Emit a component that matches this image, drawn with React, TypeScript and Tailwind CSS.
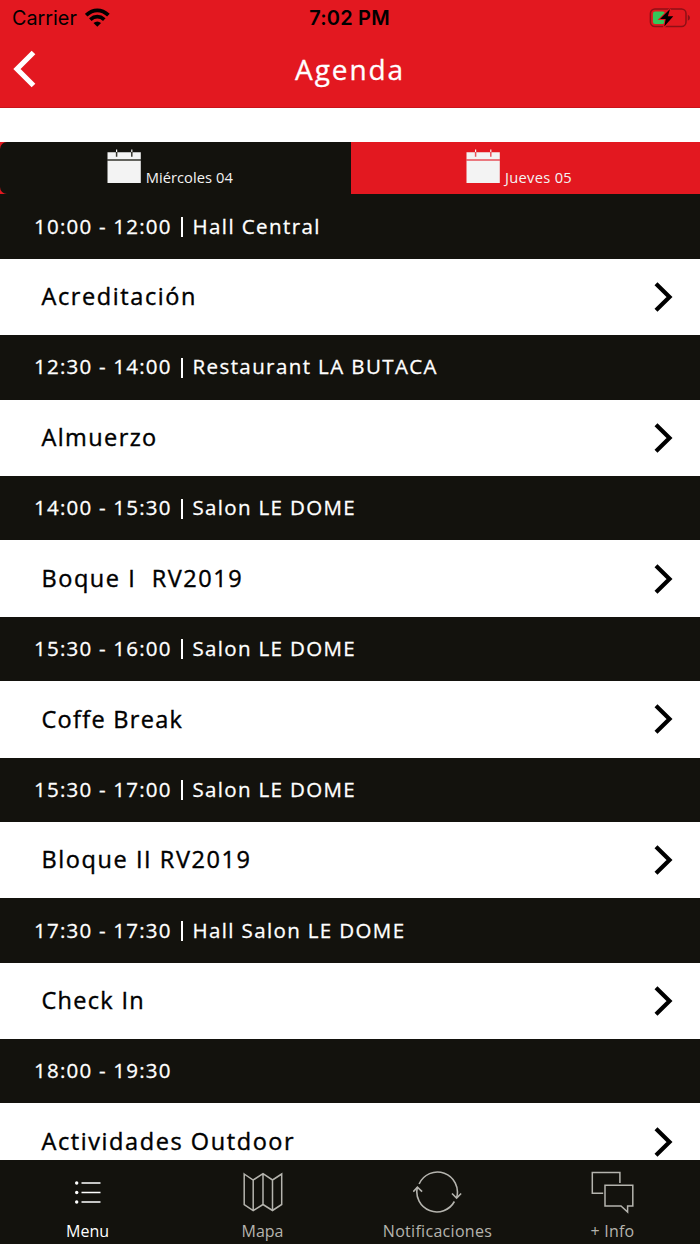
import { ReactNode } from "react";
import clsx from "clsx";

type Session = {
  time: string;
  room?: string;
  title: string;
  roomTracking?: string;
  titleTracking: string;
};

const sessions: Session[] = [
  {
    time: "10:00 - 12:00",
    room: "Hall Central",
    title: "Acreditación",
    roomTracking: "tracking-[1.42px]",
    titleTracking: "tracking-[1.6px]",
  },
  {
    time: "12:30 - 14:00",
    room: "Restaurant LA BUTACA",
    title: "Almuerzo",
    roomTracking: "tracking-[1.4px]",
    titleTracking: "tracking-[1.4px]",
  },
  {
    time: "14:00 - 15:30",
    room: "Salon LE DOME",
    title: "Boque I  RV2019",
    roomTracking: "tracking-[1.33px]",
    titleTracking: "tracking-[1.55px]",
  },
  {
    time: "15:30 - 16:00",
    room: "Salon LE DOME",
    title: "Coffe Break",
    roomTracking: "tracking-[1.33px]",
    titleTracking: "tracking-[1.3px]",
  },
  {
    time: "15:30 - 17:00",
    room: "Salon LE DOME",
    title: "Bloque II RV2019",
    roomTracking: "tracking-[1.33px]",
    titleTracking: "tracking-[1.58px]",
  },
  {
    time: "17:30 - 17:30",
    room: "Hall Salon LE DOME",
    title: "Check In",
    roomTracking: "tracking-[1.37px]",
    titleTracking: "tracking-[1.3px]",
  },
  {
    time: "18:00 - 19:30",
    title: "Actividades Outdoor",
    titleTracking: "tracking-[1.58px]",
  },
];

const WifiIcon = () => (
  <svg width="26" height="20" viewBox="0 0 26 20" fill="none" stroke="#000" strokeWidth="3.8">
    <path d="M1.2 7.2Q6.4 2.3 12.3 2.3T23.4 7.2" />
    <path d="M5.3 11.6Q8.6 8.7 12.3 8.7T19.3 11.6" />
    <path d="M8.5 15Q12.3 11.8 16.1 15L12.3 18.8Z" fill="#000" stroke="none" />
  </svg>
);

const BatteryIcon = () => (
  <svg width="42" height="20" viewBox="0 0 42 20">
    <rect x="1.4" y="1" width="35.6" height="17.5" rx="4.5" fill="none" stroke="#8d1016" strokeWidth="1.5" />
    <path d="M38.8 6.8Q41 7.6 41 9.8T38.8 12.8Z" fill="#8d1016" />
    <rect x="3.9" y="3.5" width="12" height="12.5" rx="2.2" fill="#34c759" />
    <path
      d="M21 1L11 11H16.7L15.3 18.6L24.3 8.2H18.9Z"
      fill="#000"
      stroke="#e31820"
      strokeWidth="2"
      paintOrder="stroke"
    />
  </svg>
);

const CalendarIcon = ({ lineClass }: { lineClass: string }) => (
  <svg width="34" height="35" viewBox="0 0 34 35">
    <path d="M.5 3.3H33.8V34H.5Z" fill="#f3f3f3" />
    <path d="M0 11H34M9.6 3V7.7M24.8 3V7.7" className={lineClass} strokeWidth="1.5" fill="none" />
    <path d="M9.6 .5V3M24.8 .5V3" stroke="#f3f3f3" strokeWidth="1.2" />
  </svg>
);

const ChevronRight = () => (
  <svg width="19" height="30" viewBox="0 0 19 30" fill="none" stroke="#000" strokeWidth="4.2">
    <path d="M2 1.7L15.5 15L2 28.3" />
  </svg>
);

const MenuIcon = () => (
  <svg width="30" height="24" viewBox="0 0 30 24" stroke="#fff" strokeWidth="1.7">
    <path d="M8.5 3H27.5M8.5 12.5H27.5M8.5 22H27.5" />
    <g fill="#fff" stroke="none">
      <circle cx="3.7" cy="3" r="1.7" />
      <circle cx="3.7" cy="12.5" r="1.7" />
      <circle cx="3.7" cy="22" r="1.7" />
    </g>
  </svg>
);

const MapIcon = () => (
  <svg width="40" height="40" viewBox="0 0 40 40" fill="none" stroke="#b5b4ae" strokeWidth="1.5">
    <path d="M1.2 2L10.2 8L20 1.7L29.5 8L38.7 2V32.5L29.5 38.5L20 32.5L10.2 38.5L1.2 32.5ZM10.2 8V38M20 2V32.5M29.5 8V38" />
  </svg>
);

const SyncIcon = () => (
  <svg width="50" height="44" viewBox="0 0 50 44" fill="none" stroke="#b5b4ae" strokeWidth="1.6">
    <g transform="translate(-.9 1.2)">
      <path d="M7 12.8A20 20 0 0 1 44.5 26.5" />
      <path d="M42.3 30.3A20 20 0 0 1 5.3 16" />
      <path d="M1.2 20.5L5.3 16L10 20.5M39.9 22.3L44.5 26.8L49 22.3" />
    </g>
  </svg>
);

const ChatIcon = () => (
  <svg width="44" height="43" viewBox="0 0 44 43" fill="none" stroke="#b5b4ae" strokeWidth="1.5">
    <path d="M12.2 22.3H1.3V1.6H28.9V12" />
    <path d="M14 14.2H41.8V35H36.6V41L30 35H14Z" />
  </svg>
);

const Tab = ({ label, active }: { label: string; active?: boolean }) => (
  <button
    className={clsx(
      "flex items-start justify-center gap-[5px] pt-[7px] text-[#f3f3f3]",
      active ? "w-[351px] rounded-l-[7px] bg-[#13120d] pr-[11.5px]" : "flex-1 bg-[#e31820] pr-[13px]",
    )}
  >
    <CalendarIcon lineClass={active ? "stroke-[#34342d]" : "stroke-[#e8505a]"} />
    <span
      className={clsx(
        "mt-[18px] text-[14.7px] leading-5 whitespace-nowrap",
        active ? "tracking-[0.05px]" : "tracking-[0.3px]",
      )}
    >
      {label}
    </span>
  </button>
);

type NavItemProps = {
  label: string;
  icon: ReactNode;
  className: string;
};

const NavItem = ({ label, icon, className }: NavItemProps) => (
  <button className="flex w-[175px] flex-col items-center pt-2.5">
    <span className="flex h-[44px] items-center">{icon}</span>
    <span className={clsx("mt-[7px] text-[16px] leading-5 whitespace-nowrap", className)}>
      {label}
    </span>
  </button>
);

const App = () => {
  return (
    <div className="flex h-[1244px] w-[700px] flex-col overflow-hidden bg-white font-['Open_Sans','Noto_Sans',sans-serif]">
      <header className="h-[108px] shrink-0 border-b border-[#c9141b] bg-[#e31820]">
        <div className="grid h-9 grid-cols-3 items-center pr-[9px] pl-3 font-['Inter',sans-serif] text-black">
          <div className="flex items-center gap-2">
            <span className="text-[19.8px] leading-6">Carrier</span>
            <WifiIcon />
          </div>
          <span className="pr-1 text-center text-[20px] leading-6 font-semibold tracking-[0.2px]">
            7:02 PM
          </span>
          <div className="flex justify-end">
            <BatteryIcon />
          </div>
        </div>
        <div className="grid h-[66px] grid-cols-[60px_1fr_60px] items-center">
          <svg className="ml-3" width="24" height="38" viewBox="0 0 24 38" fill="none" stroke="#fff" strokeWidth="5.2">
            <path d="M21.5 2.5L5 19L21.5 35.5" />
          </svg>
          <h1 className="text-center text-[28px] tracking-[1.9px] text-white [-webkit-text-stroke:0.3px]">
            Agenda
          </h1>
        </div>
      </header>

      <div className="mt-[34px] flex h-[52.4px] shrink-0 bg-[#e31820]">
        <Tab label="Miércoles 04" active />
        <Tab label="Jueves 05" />
      </div>

      <main className="min-h-0 flex-1 overflow-hidden">
        {sessions.map((session) => (
          <section key={session.time}>
            <h2 className="flex h-[64.4px] items-center bg-[#13120d] pb-px pl-[34px] text-[20.5px] whitespace-nowrap text-white [-webkit-text-stroke:0.3px]">
              <span className="w-[147px] tracking-[1.22px]">{session.time}</span>
              {session.room && (
                <>
                  <span className="mt-0.5 h-5 w-0.5 bg-white" />
                  <span className={clsx("ml-[9.5px]", session.roomTracking)}>{session.room}</span>
                </>
              )}
            </h2>
            <div className="flex h-[76.4px] items-center justify-between bg-white pr-[27px] pl-[41.5px] text-black">
              <span
                className={clsx(
                  "text-[23.5px] whitespace-pre [-webkit-text-stroke:0.4px]",
                  session.titleTracking,
                )}
              >
                {session.title}
              </span>
              <ChevronRight />
            </div>
          </section>
        ))}
      </main>

      <nav className="flex h-[84px] shrink-0 bg-[#13120d]">
        <NavItem label="Menu" icon={<MenuIcon />} className="text-white" />
        <NavItem label="Mapa" icon={<MapIcon />} className="text-[#b5b4ae]" />
        <NavItem
          label="Notificaciones"
          icon={<SyncIcon />}
          className="tracking-[0.3px] text-[#b5b4ae]"
        />
        <NavItem label="+ Info" icon={<ChatIcon />} className="tracking-[0.2px] text-[#b5b4ae]" />
      </nav>
    </div>
  );
};

export default App;
